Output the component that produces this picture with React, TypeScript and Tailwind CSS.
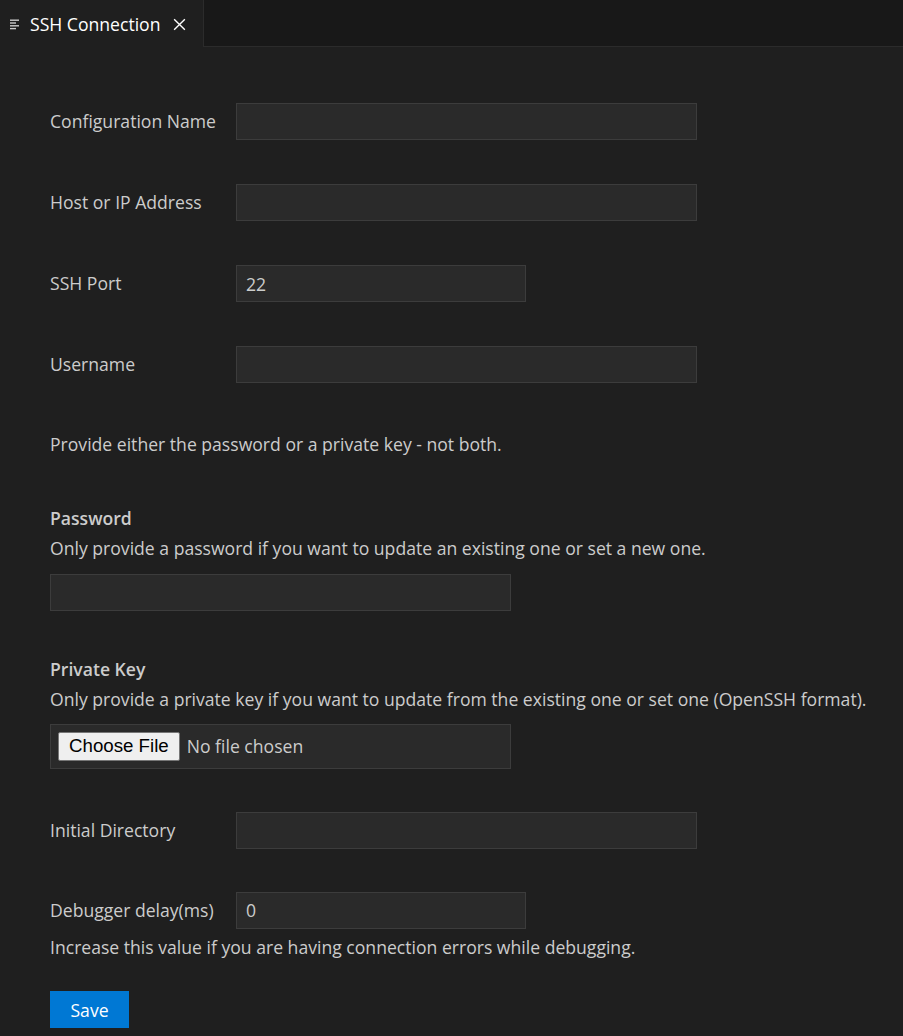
import { useState } from "react";

const font = { fontFamily: '"Open Sans", "Noto Sans", sans-serif' };

const inputCls =
  "h-[37px] bg-[#2a2a2a] border border-[#3c3c3c] text-[#cccccc] px-[9px] text-[17.6px] outline-none";

interface RowProps {
  label: string;
  value?: string;
  short?: boolean;
}

const Row = ({ label, value = "", short }: RowProps) => {
  const [val, setVal] = useState(value);
  return (
    <div className="flex items-center">
      <label className="w-[186px] text-[17.6px] text-[#cccccc]">{label}</label>
      <input
        value={val}
        onChange={(e) => setVal(e.target.value)}
        className={`${inputCls} ${short ? "w-[290px]" : "w-[461px]"}`}
        style={font}
      />
    </div>
  );
};

export default function App() {
  return (
    <div className="min-h-[1036px] w-full bg-[#1f1f1f] text-[#cccccc]" style={font}>
      {/* tab bar */}
      <div className="flex h-[47px] bg-[#181818]">
        <div className="flex h-full w-[204px] items-center border-r border-[#2b2b2b] bg-[#1f1f1f] pl-[9px] pt-[1px]">
          <svg width="12" height="12" viewBox="0 0 12 12" className="mr-[9px]">
            <rect x="1" y="1.5" width="9" height="1.4" fill="#cccccc" />
            <rect x="1" y="4.3" width="6" height="1.4" fill="#cccccc" />
            <rect x="1" y="7.1" width="9" height="1.4" fill="#cccccc" />
            <rect x="1" y="9.9" width="6" height="1.4" fill="#cccccc" />
          </svg>
          <span className="text-[17.6px] text-white">SSH Connection</span>
          <svg width="15" height="15" viewBox="0 0 14 14" className="ml-[12px]">
            <path d="M2 2 L12 12 M12 2 L2 12" stroke="#ffffff" strokeWidth="1.3" />
          </svg>
        </div>
        <div className="flex-1 border-b border-[#2b2b2b]" />
      </div>

      <div className="flex flex-col pl-[50px] pt-[56px]">
        <div className="flex flex-col gap-[44px]">
          <Row label="Configuration Name" />
          <Row label="Host or IP Address" />
          <Row label="SSH Port" value="22" short />
          <Row label="Username" />
        </div>

        <p className="mt-[48px] text-[17.6px]">
          Provide either the password or a private key - not both.
        </p>

        <div className="mt-[48px] text-[17.6px] font-semibold">Password</div>
        <p className="mt-[3px] text-[17.6px]">
          Only provide a password if you want to update an existing one or set a new one.
        </p>
        <input type="password" className={`${inputCls} mt-[13px] w-[461px]`} />

        <div className="mt-[45px] text-[17.6px] font-semibold">Private Key</div>
        <p className="mt-[3px] text-[17.6px]">
          Only provide a private key if you want to update from the existing one or set one (OpenSSH format).
        </p>
        <div className="mt-[12px] flex h-[45px] w-[461px] items-center border border-[#3c3c3c] bg-[#2a2a2a] pl-[7px]">
          <button
            className="h-[29px] rounded-[2px] border border-[#767676] bg-[#efefef] px-[10px] text-[18.7px] leading-none text-black"
            style={{ fontFamily: '"Liberation Sans", Arial, sans-serif' }}
          >
            Choose File
          </button>
          <span className="ml-[7px] text-[17.6px] text-[#cccccc]">No file chosen</span>
        </div>

        <div className="mt-[43px]">
          <Row label="Initial Directory" />
        </div>

        <div className="mt-[43px]">
          <Row label="Debugger delay(ms)" value="0" short />
        </div>
        <p className="mt-[5px] text-[17.6px]">
          Increase this value if you are having connection errors while debugging.
        </p>

        <button className="mt-[31px] h-[37px] w-[79px] bg-[#0078d4] text-[17.6px] text-white">
          Save
        </button>
      </div>
    </div>
  );
}
